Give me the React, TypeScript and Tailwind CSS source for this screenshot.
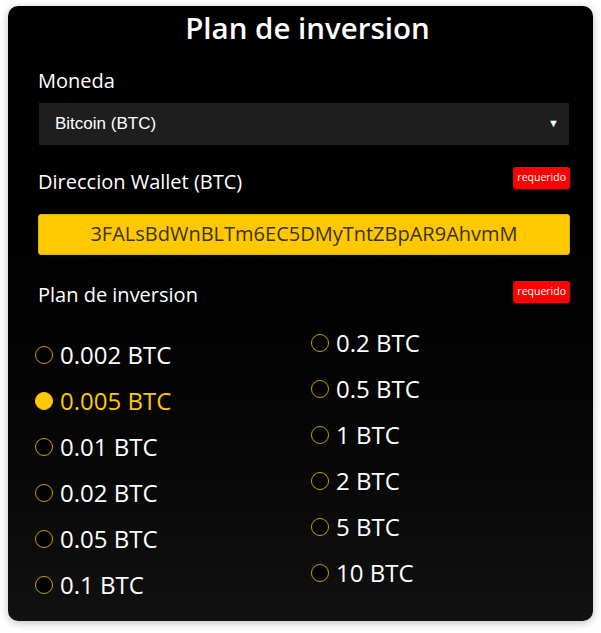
import { useState } from 'react';

const left = ['0.002', '0.005', '0.01', '0.02', '0.05', '0.1'];
const right = ['0.2', '0.5', '1', '2', '5', '10'];

function Radio({ value, selected, onPick }: { value: string; selected: boolean; onPick: (v: string) => void }) {
  return (
    <label className="flex items-center h-[46px] cursor-pointer" onClick={() => onPick(value)}>
      <span
        className={`w-[18px] h-[18px] rounded-full border-[1.5px] shrink-0 ${
          selected ? 'bg-[#ffc800] border-[#ffc800]' : 'bg-black border-[#c9a000]'
        }`}
      />
      <span className={`ml-[7px] text-[24px] ${selected ? 'text-[#ffc800]' : 'text-white'}`}>{value} BTC</span>
    </label>
  );
}

function Badge() {
  return (
    <span className="h-[22px] flex items-center bg-[#ff0000] text-white text-[10.5px] leading-none px-[4px] rounded-[3px]">requerido</span>
  );
}

export default function App() {
  const [plan, setPlan] = useState('0.005');

  return (
    <div className="bg-white min-h-screen pt-[6px] px-[8px]" style={{ fontFamily: '"Open Sans", sans-serif' }}>
      <div className="w-[585px] h-[615px] rounded-[10px] bg-gradient-to-b from-[#000000] to-[#111111] shadow-[0_2px_8px_rgba(0,0,0,0.25)] pl-[30px] pr-[23px]">
        <h1 className="text-center text-white text-[29.5px] font-semibold leading-none pt-[7px] pl-[7px]">Plan de inversion</h1>

        <div className="mt-[28px] text-white text-[20px] leading-none">Moneda</div>
        <div
          className="mt-[11px] h-[44px] bg-[#1e1e1e] border border-black shadow-[0_0_4px_rgba(0,0,0,0.8)] flex items-center justify-between pl-[16px] pr-[10px] text-white text-[17px]"
          style={{ fontFamily: '"Liberation Sans", Arial, sans-serif' }}
        >
          <span>Bitcoin (BTC)</span>
          <span className="text-[11px]">▼</span>
        </div>

        <div className="mt-[22px] flex items-start justify-between">
          <span className="text-white text-[20px] leading-[28px]">Direccion Wallet (BTC)</span>
          <span className="-mt-[1px]"><Badge /></span>
        </div>
        <div className="mt-[18px] h-[41px] rounded-[3px] bg-[#ffc800] border border-[#e0b000] flex items-center justify-center text-[#3b3410] text-[20px]">
          3FALsBdWnBLTm6EC5DMyTntZBpAR9AhvmM
        </div>

        <div className="mt-[26px] flex items-start justify-between">
          <span className="text-white text-[20px] leading-[28px]">Plan de inversion</span>
          <span className="mt-[0px]"><Badge /></span>
        </div>

        <div className="flex">
          <div className="w-[276px] pt-[23px] -ml-[3px]">
            {left.map((v) => (
              <Radio key={v} value={v} selected={plan === v} onPick={setPlan} />
            ))}
          </div>
          <div className="pt-[11px]">
            {right.map((v) => (
              <Radio key={v} value={v} selected={plan === v} onPick={setPlan} />
            ))}
          </div>
        </div>
      </div>
    </div>
  );
}
